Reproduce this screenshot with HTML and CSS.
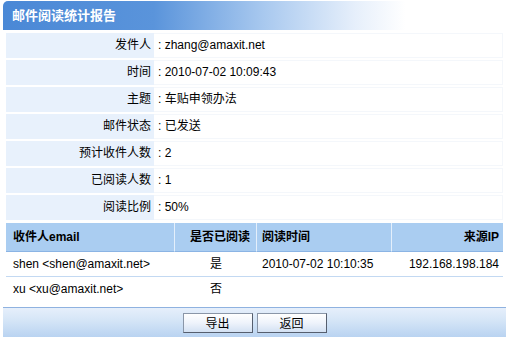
FILE: index.html
```html
<!DOCTYPE html>
<html>
<head>
<meta charset="utf-8">
<link rel="stylesheet" href="styles.css">
</head>
<body>
<div class="panel">
  <div class="title">邮件阅读统计报告</div>
  <div class="info">
    <div class="row"><div class="lbl">发件人</div><div class="val">: zhang@amaxit.net</div></div>
    <div class="row"><div class="lbl">时间</div><div class="val">: 2010-07-02 10:09:43</div></div>
    <div class="row"><div class="lbl">主题</div><div class="val">: 车贴申领办法</div></div>
    <div class="row"><div class="lbl">邮件状态</div><div class="val">: 已发送</div></div>
    <div class="row"><div class="lbl">预计收件人数</div><div class="val">: 2</div></div>
    <div class="row"><div class="lbl">已阅读人数</div><div class="val">: 1</div></div>
    <div class="row"><div class="lbl">阅读比例</div><div class="val">: 50%</div></div>
  </div>
  <div class="grid">
    <div class="th c1">收件人email</div>
    <div class="th c2">是否已阅读</div>
    <div class="th c3">阅读时间</div>
    <div class="th c4">来源IP</div>
    <div class="td c1">shen &lt;shen@amaxit.net&gt;</div>
    <div class="td c2m">是</div>
    <div class="td c3">2010-07-02 10:10:35</div>
    <div class="td c4">192.168.198.184</div>
    <div class="td c1 last">xu &lt;xu@amaxit.net&gt;</div>
    <div class="td c2m last">否</div>
    <div class="td c3 last"></div>
    <div class="td c4 last"></div>
  </div>
  <div class="footer">
    <button class="btn">导出</button>
    <button class="btn">返回</button>
  </div>
</div>
</body>
</html>
```

FILE: styles.css
```css
html, body { margin: 0; padding: 0; background: #fff; }
body {
  font-family: "Liberation Sans", "Noto Sans CJK SC", sans-serif;
  font-size: 12px;
  color: #000;
}
.panel { width: 503px; margin-left: 3px; padding-top: 1px; }
.title {
  height: 29px;
  line-height: 29px;
  padding-left: 9px;
  color: #fff;
  font-weight: bold;
  font-size: 13px;
  border-top-left-radius: 5px;
  background: linear-gradient(to right, #4a88d6 0%, #5a94db 30%, #a9c9ef 52%, #e6effb 70%, #ffffff 80%);
}
.info { display: flex; flex-direction: column; gap: 2px; padding: 3px 3px 0 3px; }
.row { display: flex; height: 25px; }
.lbl {
  width: 145px;
  background: #e8f1fc;
  text-align: right;
  line-height: 25px;
  padding-right: 3px;
}
.val {
  flex: 1;
  padding-left: 4px;
  background: #fff;
  border: 1px solid #f4f7fb;
  border-left: none;
  line-height: 23px;
}
.grid {
  margin: 3px 3px 0 3px;
  display: grid;
  grid-template-columns: 169px 82px 135px 111px;
}
.th {
  background: #aacdf1;
  font-weight: bold;
  height: 29px;
  line-height: 29px;
  border-right: 1px solid #e4effb;
  border-bottom: 1px solid #8bb4e4;
  box-sizing: border-box;
}
.th.c4 { border-right: none; }
.td {
  height: 25px;
  line-height: 25px;
  border-bottom: 1px solid #c3d9f2;
  box-sizing: border-box;
}
.td.last { border-bottom: none; height: 24px; }
.c1 { padding-left: 7px; }
.c2 { text-align: right; padding-right: 6px; }
.c2m { text-align: center; }
.c3 { padding-left: 5px; }
.c4 { text-align: right; padding-right: 4px; }
.footer {
  margin-top: 6px;
  height: 30px;
  border-top: 1px solid #8fb2e0;
  background: linear-gradient(to bottom, #e6effb 0%, #d6e6f7 40%, #b9d3f1 100%);
  display: flex;
  justify-content: center;
  align-items: center;
  gap: 4px;
  box-sizing: border-box;
}
.btn {
  width: 70px;
  height: 20px;
  font-family: "Liberation Sans", "Noto Sans CJK SC", sans-serif;
  font-size: 12px;
  padding: 0;
  border: 1px solid #555e6e;
  border-top-color: #8a96a8;
  border-left-color: #8a96a8;
  background: linear-gradient(to bottom, #ffffff 0%, #eef3fb 50%, #d3e1f3 100%);
  color: #000;
}
```
